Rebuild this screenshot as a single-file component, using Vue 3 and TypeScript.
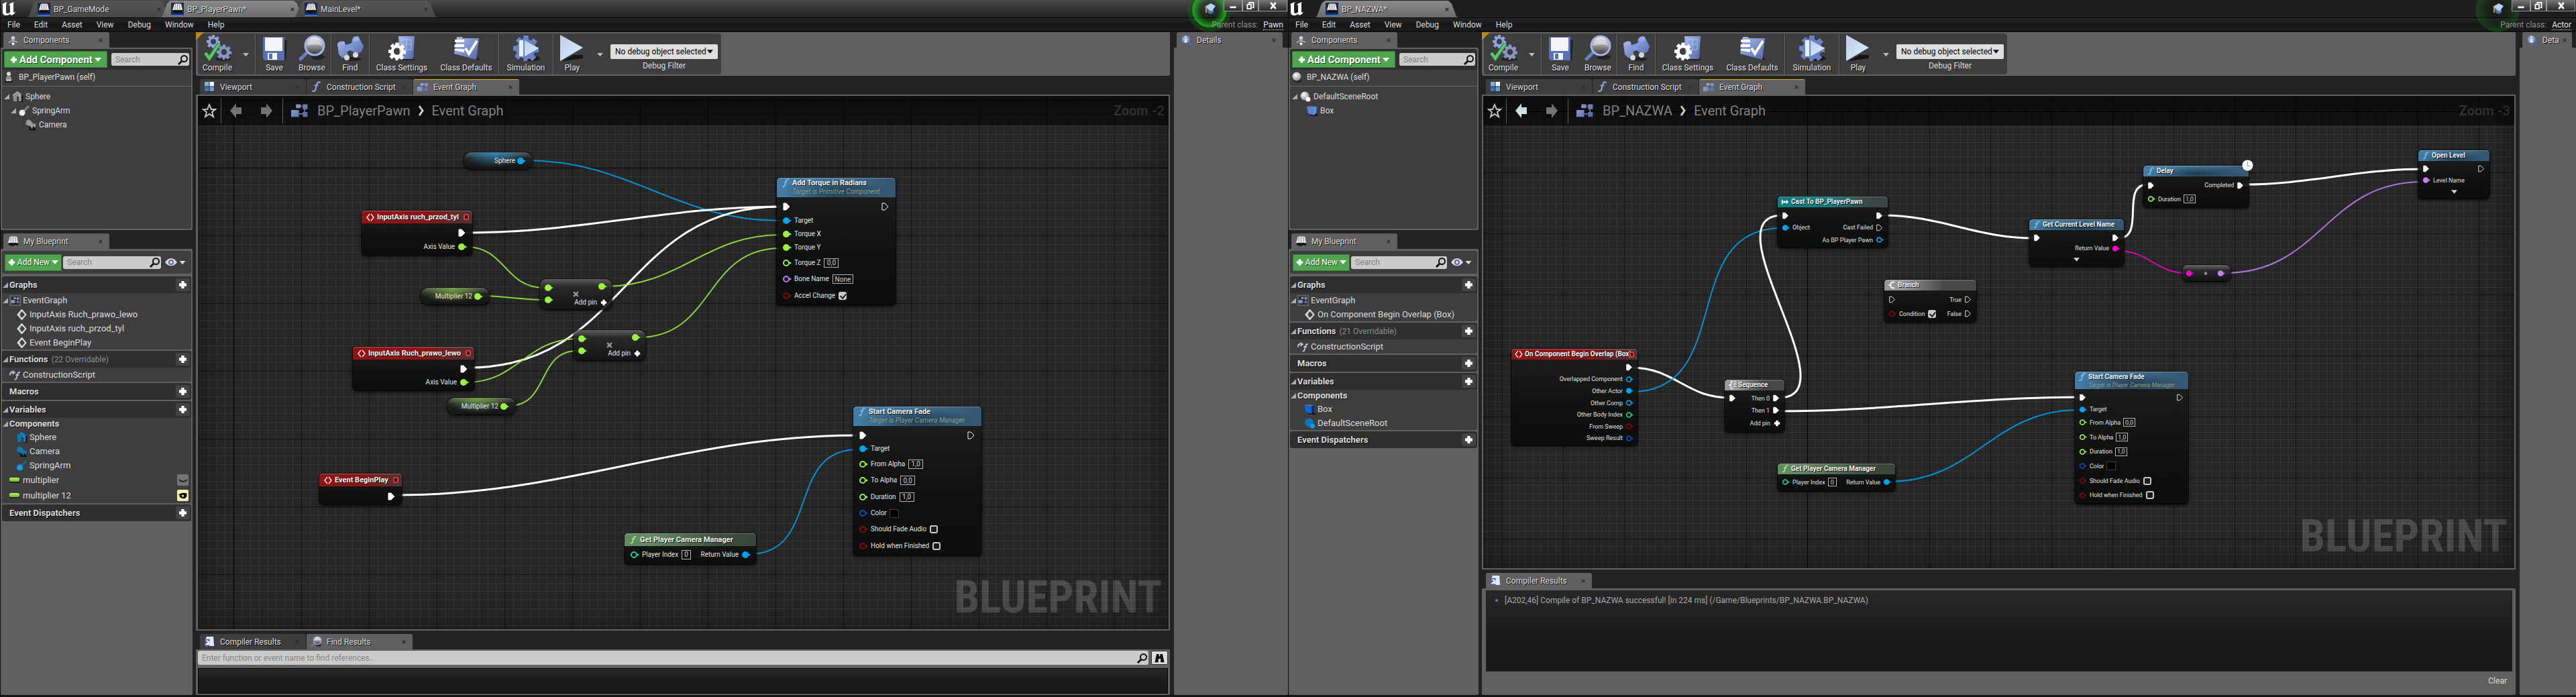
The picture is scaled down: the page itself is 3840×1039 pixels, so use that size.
<script setup lang="ts">
type PinKind = 'exec' | 'object' | 'float' | 'int' | 'bool' | 'name' | 'string' | 'struct'
interface Pin { k: PinKind; on?: boolean; label?: string; box?: string; check?: boolean; swatch?: boolean }
interface Row { l?: Pin; r?: Pin; tall?: boolean; add?: boolean; more?: boolean }
interface GraphNode {
  type: 'node' | 'var' | 'op' | 'conv'
  x: number; y: number; w: number; h: number
  tone?: string; icon?: string; title?: string; sub?: string; stop?: boolean; latent?: boolean
  kind?: PinKind; rows?: Row[]
}
interface Wire { a: [number, number]; b: [number, number]; k: PinKind; bend?: number }
interface TreeItem { label: string; icon: string; depth: number; open?: boolean }
interface ListItem { label: string; icon?: string; depth: number; open?: boolean; bold?: boolean; vis?: 'off' | 'on' }
interface Section { title: string; note?: string; open: boolean; items: ListItem[] }
interface Win {
  id: string; focused: boolean; tabs: { label: string; active: boolean }[]; parent: string; details: string
  self: string; selfIcon: string; tree: TreeItem[]; sections: Section[]
  name: string; back: boolean; zoom: string
  grid: { ox: number; oy: number; size: number; minor: number[] }
  nodes: GraphNode[]; wires: Wire[]
}

const menus = ['File', 'Edit', 'Asset', 'View', 'Debug', 'Window', 'Help']

const colors: Record<PinKind, string> = {
  exec: '#ffffff', object: '#00a2f2', float: '#98f440', int: '#18cf9c',
  bool: '#8c0404', name: '#c47dfb', string: '#fb00d2', struct: '#0a4db8',
}

function fadeRows(from: string, to: string): Row[] {
  return [
    { l: { k: 'exec', on: true }, r: { k: 'exec' } },
    { l: { k: 'object', on: true, label: 'Target' } },
    { l: { k: 'float', label: 'From Alpha', box: from }, tall: true },
    { l: { k: 'float', label: 'To Alpha', box: to }, tall: true },
    { l: { k: 'float', label: 'Duration', box: '1,0' }, tall: true },
    { l: { k: 'struct', label: 'Color', swatch: true }, tall: true },
    { l: { k: 'bool', label: 'Should Fade Audio', check: false }, tall: true },
    { l: { k: 'bool', label: 'Hold when Finished', check: false }, tall: true },
  ]
}
const cameraRows: Row[] = [
  { l: { k: 'int', label: 'Player Index', box: '0' }, r: { k: 'object', on: true, label: 'Return Value' }, tall: true },
]
const axisRows: Row[] = [{ r: { k: 'exec', on: true } }, { r: { k: 'float', on: true, label: 'Axis Value' } }]

const windows: Win[] = [
  {
    id: 'pawn', focused: true, parent: 'Pawn', details: 'Details',
    tabs: [{ label: 'BP_GameMode', active: false }, { label: 'BP_PlayerPawn*', active: true }, { label: 'MainLevel*', active: false }],
    self: 'BP_PlayerPawn (self)', selfIcon: 'pawn',
    tree: [
      { label: 'Sphere', icon: 'house', depth: 0, open: true },
      { label: 'SpringArm', icon: 'spring', depth: 1, open: true },
      { label: 'Camera', icon: 'camera', depth: 2 },
    ],
    sections: [
      { title: 'Graphs', open: true, items: [
        { label: 'EventGraph', icon: 'graph', depth: 0, open: true },
        { label: 'InputAxis Ruch_prawo_lewo', icon: 'event', depth: 1 },
        { label: 'InputAxis ruch_przod_tyl', icon: 'event', depth: 1 },
        { label: 'Event BeginPlay', icon: 'event', depth: 1 },
      ] },
      { title: 'Functions', note: '(22 Overridable)', open: true, items: [{ label: 'ConstructionScript', icon: 'construct', depth: 0 }] },
      { title: 'Macros', open: false, items: [] },
      { title: 'Variables', open: true, items: [
        { label: 'Components', depth: 0, open: true, bold: true },
        { label: 'Sphere', icon: 'house', depth: 1 },
        { label: 'Camera', icon: 'camera', depth: 1 },
        { label: 'SpringArm', icon: 'spring', depth: 1 },
        { label: 'multiplier', icon: 'pill', depth: 0, vis: 'off' },
        { label: 'multiplier 12', icon: 'pill', depth: 0, vis: 'on' },
      ] },
      { title: 'Event Dispatchers', open: false, items: [] },
    ],
    name: 'BP_PlayerPawn', back: false, zoom: 'Zoom -2',
    grid: { ox: 53, oy: 107, size: 101, minor: [13, 25, 38, 51, 63, 76, 88] },
    nodes: [
      { type: 'var', x: 396, y: 84, w: 103, h: 25, title: 'Sphere', kind: 'object' },
      { type: 'node', x: 244, y: 171, w: 165, h: 66, tone: 'red', icon: 'event', title: 'InputAxis ruch_przod_tyl', stop: true, rows: axisRows },
      { type: 'var', x: 332, y: 286, w: 103, h: 25, title: 'Multiplier 12', kind: 'float' },
      { type: 'op', x: 510, y: 273, w: 107, h: 45 },
      { type: 'op', x: 560, y: 349, w: 107, h: 45 },
      { type: 'node', x: 231, y: 374, w: 181, h: 65, tone: 'red', icon: 'event', title: 'InputAxis Ruch_prawo_lewo', stop: true, rows: axisRows },
      { type: 'var', x: 371, y: 450, w: 103, h: 25, title: 'Multiplier 12', kind: 'float' },
      { type: 'node', x: 181, y: 563, w: 123, h: 46, tone: 'red', icon: 'event', title: 'Event BeginPlay', stop: true, rows: [{ r: { k: 'exec', on: true } }] },
      { type: 'node', x: 863, y: 122, w: 177, h: 190, tone: 'blue', icon: 'func', title: 'Add Torque in Radians', sub: 'Target is Primitive Component', rows: [
        { l: { k: 'exec', on: true }, r: { k: 'exec' } },
        { l: { k: 'object', on: true, label: 'Target' } },
        { l: { k: 'float', on: true, label: 'Torque X' } },
        { l: { k: 'float', on: true, label: 'Torque Y' } },
        { l: { k: 'float', label: 'Torque Z', box: '0,0' }, tall: true },
        { l: { k: 'name', label: 'Bone Name', box: 'None' }, tall: true },
        { l: { k: 'bool', label: 'Accel Change', check: true }, tall: true },
      ] },
      { type: 'node', x: 977, y: 463, w: 191, h: 222, tone: 'blue', icon: 'func', title: 'Start Camera Fade', sub: 'Target is Player Camera Manager', rows: fadeRows('1,0', '0,0') },
      { type: 'node', x: 636, y: 652, w: 196, h: 46, tone: 'olive', icon: 'func', title: 'Get Player Camera Manager', rows: cameraRows },
    ],
    wires: [
      { a: [488, 96], b: [869, 186], k: 'object' },
      { a: [399, 204], b: [869, 165], k: 'exec' },
      { a: [403, 405], b: [869, 165], k: 'exec' },
      { a: [400, 225], b: [516, 286], k: 'float' },
      { a: [424, 298], b: [516, 304], k: 'float' },
      { a: [400, 427], b: [566, 362], k: 'float' },
      { a: [463, 462], b: [566, 380], k: 'float' },
      { a: [606, 284], b: [869, 207], k: 'float' },
      { a: [656, 360], b: [869, 227], k: 'float' },
      { a: [295, 595], b: [983, 506], k: 'exec' },
      { a: [822, 683], b: [983, 527], k: 'object' },
    ],
  },
  {
    id: 'nazwa', focused: false, parent: 'Actor', details: 'Deta',
    tabs: [{ label: 'BP_NAZWA*', active: true }],
    self: 'BP_NAZWA (self)', selfIcon: 'ball',
    tree: [
      { label: 'DefaultSceneRoot', icon: 'scene', depth: 0, open: true },
      { label: 'Box', icon: 'cube', depth: 1 },
    ],
    sections: [
      { title: 'Graphs', open: true, items: [
        { label: 'EventGraph', icon: 'graph', depth: 0, open: true },
        { label: 'On Component Begin Overlap (Box)', icon: 'event', depth: 1 },
      ] },
      { title: 'Functions', note: '(21 Overridable)', open: true, items: [{ label: 'ConstructionScript', icon: 'construct', depth: 0 }] },
      { title: 'Macros', open: false, items: [] },
      { title: 'Variables', open: true, items: [
        { label: 'Components', depth: 0, open: true, bold: true },
        { label: 'Box', icon: 'cube', depth: 1 },
        { label: 'DefaultSceneRoot', icon: 'scene', depth: 1 },
      ] },
      { title: 'Event Dispatchers', open: false, items: [] },
    ],
    name: 'BP_NAZWA', back: true, zoom: 'Zoom -3',
    grid: { ox: 483, oy: 23, size: 91, minor: [11, 23, 34, 46, 57, 68, 80] },
    nodes: [
      { type: 'node', x: 42, y: 377, w: 188, h: 144, tone: 'red', icon: 'event', title: 'On Component Begin Overlap (Box)', stop: true, rows: [
        { r: { k: 'exec', on: true } },
        { r: { k: 'object', label: 'Overlapped Component' } },
        { r: { k: 'object', on: true, label: 'Other Actor' } },
        { r: { k: 'object', label: 'Other Comp' } },
        { r: { k: 'int', label: 'Other Body Index' } },
        { r: { k: 'bool', label: 'From Sweep' } },
        { r: { k: 'struct', label: 'Sweep Result' } },
      ] },
      { type: 'node', x: 439, y: 150, w: 164, h: 76, tone: 'teal', icon: 'cast', title: 'Cast To BP_PlayerPawn', rows: [
        { l: { k: 'exec', on: true }, r: { k: 'exec', on: true } },
        { l: { k: 'object', on: true, label: 'Object' }, r: { k: 'exec', label: 'Cast Failed' } },
        { r: { k: 'object', label: 'As BP Player Pawn' } },
      ] },
      { type: 'node', x: 598, y: 274, w: 137, h: 63, tone: 'grey', icon: 'branch', title: 'Branch', rows: [
        { l: { k: 'exec' }, r: { k: 'exec', label: 'True' } },
        { l: { k: 'bool', label: 'Condition', check: true }, r: { k: 'exec', label: 'False' } },
      ] },
      { type: 'node', x: 814, y: 184, w: 141, h: 70, tone: 'blue', icon: 'func', title: 'Get Current Level Name', rows: [
        { l: { k: 'exec', on: true }, r: { k: 'exec', on: true } },
        { r: { k: 'string', on: true, label: 'Return Value' } },
        { more: true },
      ] },
      { type: 'node', x: 360, y: 423, w: 89, h: 78, tone: 'grey', icon: 'sequence', title: 'Sequence', rows: [
        { l: { k: 'exec', on: true }, r: { k: 'exec', on: true, label: 'Then 0' } },
        { r: { k: 'exec', on: true, label: 'Then 1' } },
        { add: true, tall: true },
      ] },
      { type: 'node', x: 882, y: 411, w: 169, h: 197, tone: 'blue', icon: 'func', title: 'Start Camera Fade', sub: 'Target is Player Camera Manager', rows: fadeRows('0,0', '1,0') },
      { type: 'node', x: 439, y: 548, w: 175, h: 41, tone: 'olive', icon: 'func', title: 'Get Player Camera Manager', rows: cameraRows },
      { type: 'node', x: 984, y: 104, w: 157, h: 62, tone: 'blue', icon: 'func', title: 'Delay', latent: true, rows: [
        { l: { k: 'exec', on: true }, r: { k: 'exec', on: true, label: 'Completed' } },
        { l: { k: 'float', label: 'Duration', box: '1,0' } },
      ] },
      { type: 'node', x: 1394, y: 81, w: 106, h: 72, tone: 'blue', icon: 'func', title: 'Open Level', rows: [
        { l: { k: 'exec', on: true }, r: { k: 'exec' } },
        { l: { k: 'name', on: true, label: 'Level Name' } },
        { more: true },
      ] },
      { type: 'conv', x: 1042, y: 252, w: 72, h: 24 },
    ],
    wires: [
      { a: [221, 405], b: [367, 450], k: 'exec' },
      { a: [221, 441], b: [445, 197], k: 'object' },
      { a: [440, 450], b: [446, 178], k: 'exec', bend: 112 },
      { a: [440, 470], b: [888, 449], k: 'exec' },
      { a: [595, 178], b: [821, 212], k: 'exec' },
      { a: [947, 212], b: [990, 132], k: 'exec' },
      { a: [947, 231], b: [1048, 264], k: 'string' },
      { a: [1134, 132], b: [1400, 109], k: 'exec' },
      { a: [1105, 264], b: [1400, 128], k: 'name' },
      { a: [604, 575], b: [888, 468], k: 'object' },
    ],
  },
]

function wirePath(w: Wire): string {
  const [x1, y1] = w.a
  const [x2, y2] = w.b
  const c = w.bend ?? Math.round((Math.abs(x2 - x1) + Math.abs(y2 - y1)) / 3)
  return `M${x1} ${y1}C${x1 + c} ${y1} ${x2 - c} ${y2} ${x2} ${y2}`
}
function box(n: GraphNode) {
  return { left: n.x + 'px', top: n.y + 'px', width: n.w + 'px', height: n.h + 'px' }
}
</script>

<template>
  <div class="desktop">
    <svg class="defs" aria-hidden="true">
      <defs>
        <linearGradient id="gBlue" x1="0" y1="0" x2="1" y2="1"><stop offset="0" stop-color="#a9bdf0" /><stop offset="1" stop-color="#5068a8" /></linearGradient>
        <linearGradient id="gPale" x1="0" y1="0" x2="1" y2="1"><stop offset="0" stop-color="#c0cbee" /><stop offset="1" stop-color="#d6f2f8" /></linearGradient>
        <linearGradient id="gLens" x1="0" y1="0" x2="0" y2="1"><stop offset="0" stop-color="#fff" /><stop offset=".5" stop-color="#999" /><stop offset="1" stop-color="#333" /></linearGradient>
        <radialGradient id="gBall" cx=".4" cy=".35" r=".7"><stop offset="0" stop-color="#fff" /><stop offset="1" stop-color="#888" /></radialGradient>
        <linearGradient id="gPill" x1="0" y1="0" x2="0" y2="1"><stop offset="0" stop-color="#c4f27c" /><stop offset="1" stop-color="#5cb80e" /></linearGradient>
      </defs>
      <symbol id="i-unreal" viewBox="0 0 24 20"><path fill="#fff" d="M1 5C3 2 6 1 10 0c-1 1-2 2-2 4v10c0 2 1 3 2 3 2 0 3-1 4-2V5c0-1-1-1-2 0 1-3 5-4 8-5-1 1-1 2-1 4v10c0 2 1 2 3 0-1 4-4 5-6 6l-2-2c-2 1-3 2-6 2-3 0-5-2-5-5V5C3 3 2 4 1 5z" /></symbol>
      <symbol id="i-book" viewBox="0 0 18 18"><path fill="#111" d="M2 12h15v4l-6-1-2 2-7-2z" /><path fill="#e8e8e8" d="M4 2l4-1 1 1 2-1 4 1 2 10-6-1-2 1-2-1-6 1z" /><path stroke="#888" fill="none" d="M9 2v9M6 2L5 10M12 2l1 8" /></symbol>
      <symbol id="i-x" viewBox="0 0 8 8"><path stroke="currentColor" stroke-width="2" d="M1 1l6 6M7 1L1 7" /></symbol>
      <symbol id="i-comps" viewBox="0 0 18 18"><path fill="#4d5d80" d="M4 1h9v7H4z" /><circle cx="9" cy="6" r="3" fill="#c9cdd6" /><path stroke="#aab" stroke-width="2" d="M9 8v8M8 10l-6 3M10 10l6 3" /><path fill="#fff" d="M6 14h6l-3 4z" /></symbol>
      <symbol id="i-info" viewBox="0 0 18 18"><path stroke="#4668c0" stroke-width="3" d="M12 12l5 5" /><circle cx="8" cy="8" r="6" fill="#aaa" stroke="#4f78d0" stroke-width="2" /><path stroke="#fff" stroke-width="2" d="M8 3v2M8 7v5M6 12h4" /></symbol>
      <symbol id="i-search" viewBox="0 0 16 16"><circle cx="9.500" cy="6.500" r="4.500" fill="none" stroke="#111" stroke-width="2" /><path stroke="#111" stroke-width="3" d="M6 10l-5 5" /></symbol>
      <symbol id="i-plus" viewBox="0 0 12 12"><path fill="currentColor" d="M4 1h4v3h3v4H8v3H4V8H1V4h3z" /></symbol>
      <symbol id="i-down" viewBox="0 0 10 8"><path fill="currentColor" d="M0 1h10L5 7z" /></symbol>
      <symbol id="i-tri" viewBox="0 0 8 8"><path fill="#aaa" d="M8 0v8H0z" /></symbol>
      <symbol id="i-eye" viewBox="0 0 18 14"><path fill="#d4d9e4" d="M0 7c5-8 13-8 18 0-5 7-13 7-18 0z" /><circle cx="9" cy="7" r="4" fill="#5b6a9c" /><circle cx="9" cy="7" r="2" fill="#e4e9fa" /></symbol>
      <symbol id="i-pawn" viewBox="0 0 14 16"><ellipse cx="7" cy="14" rx="6" ry="2" fill="#111" /><circle cx="7" cy="3" r="3" fill="#ddd" /><path fill="#bbb" d="M4 6h6v3h1v5H3V9h1z" /><path stroke="#444" d="M4 7h6M4 10h6" /></symbol>
      <symbol id="i-ball" viewBox="0 0 14 16"><ellipse cx="8" cy="13" rx="6" ry="3" fill="#222" /><circle cx="7" cy="7" r="6.500" fill="url(#gBall)" /></symbol>
      <symbol id="i-house" viewBox="0 0 16 16"><path fill="#111" d="M10 6h6v10h-6z" /><path fill="var(--ic,#8d8d8d)" d="M1 6l7-6 6 4v11h-3V8H7v7H2z" /><path stroke="var(--ic2,#ccc)" fill="none" d="M1 6l7-5 3 4v10" /></symbol>
      <symbol id="i-spring" viewBox="0 0 16 16"><circle cx="5" cy="11" r="4.500" fill="var(--ic2,#eee)" /><path stroke="var(--ic,#aaa)" stroke-width="3" d="M8 8l7-7" stroke-dasharray="2 1" /></symbol>
      <symbol id="i-camera" viewBox="0 0 16 16"><path fill="#111" d="M5 11l8 1 3 4H6z" /><path fill="var(--ic,#999)" d="M1 2l4-2 4 3 3 4 3-1v6l-4-2-1 5-3-5-6-2-1-3 2-1z" /></symbol>
      <symbol id="i-scene" viewBox="0 0 16 16"><circle cx="7" cy="7" r="6.500" fill="var(--ic,url(#gBall))" /><circle cx="12" cy="12" r="3.500" fill="var(--ic2,#fff)" /></symbol>
      <symbol id="i-cube" viewBox="0 0 16 16"><path fill="#151515" d="M6 13h10v3H7z" /><path fill="var(--ic,#5d7fe0)" d="M0 2l11 1v12L2 12z" /><path fill="var(--ic3,#4aa0d8)" d="M11 3l4-1-1 9-3 4z" /><path fill="#8fa5f0" d="M0 2l5-1 10 1-4 1z" opacity=".6" /></symbol>
      <symbol id="i-graph" viewBox="0 0 18 16"><path fill="url(#gBlue)" d="M5 1h5v4H5zM12 1h5v5h-5zM0 7h8v7H0zM12 9h5v5h-5z" /><path stroke="#8090b8" d="M10 3h2M14 6v3M8 11h4" /></symbol>
      <symbol id="i-event" viewBox="0 0 16 16"><path fill="none" stroke="currentColor" stroke-width="2" d="M8 1l6 7-6 7-6-7z" /><path fill="currentColor" d="M8 1v14L2 8z" opacity=".85" /><path fill="#444" d="M7 4l4 4-4 4-2-4z" /></symbol>
      <symbol id="i-evhead" viewBox="0 0 12 12"><path fill="none" stroke="#f3dcdc" stroke-width="1.500" d="M5 1L1 6l4 5M7 1l4 5-4 5" /></symbol>
      <symbol id="i-construct" viewBox="0 0 18 16"><path fill="#aab3d0" d="M0 8c0-4 2-6 5-6V0l5 4-5 4V5C3 5 2 6 2 9z" /><path fill="none" stroke="#b4bfe2" stroke-width="2" d="M17 4c-4-1-4 2-5 6s-1 5-4 5M10 8h5" /></symbol>
      <symbol id="i-pill" viewBox="0 0 16 8"><rect y="2" width="16" height="6" rx="2" fill="#222" /><rect width="15" height="6" rx="2" fill="url(#gPill)" /></symbol>
      <symbol id="i-window" viewBox="0 0 18 18"><path fill="#16233a" d="M2 2h15v15H2z" /><path fill="#7fb2d8" d="M1 1h7v7H1z" /><path fill="#f2f7fa" d="M9 1h7v7H9z" /><path fill="#3f74b0" d="M1 9h7v7H1z" /><path fill="#6f9fd0" d="M9 9h7v7H9z" /></symbol>
      <symbol id="i-func" viewBox="0 0 14 16"><path fill="none" stroke="currentColor" stroke-width="2" stroke-linecap="round" d="M12 2c-3-2-4 1-5 5s-1 8-5 7" /><path stroke="currentColor" stroke-width="1.500" d="M4 6h6" /></symbol>
      <symbol id="i-cast" viewBox="0 0 14 12"><path fill="none" stroke="#fff" stroke-width="2" d="M2 2v8M3 6h7" /><path fill="#fff" d="M5 3l3 3-3 3zM9 2l4 4-4 4z" /></symbol>
      <symbol id="i-branch" viewBox="0 0 14 14"><path fill="none" stroke="#fff" stroke-width="2" d="M1 7h3M12 2H9C6 2 5 4 5 7s1 5 4 5h3" /></symbol>
      <symbol id="i-sequence" viewBox="0 0 14 14"><path fill="none" stroke="#fff" stroke-width="1.500" d="M1 7h4M9 1H5v12h4M9 5h5M9 9h4M11 1h3" /></symbol>
      <symbol id="i-gear" viewBox="0 0 20 20"><path fill="currentColor" fill-rule="evenodd" d="M8 0h4v3l2 1 2-2 3 3-2 2 1 2h2v4h-3l-1 2 2 2-3 3-2-2-2 1v2H8v-3l-2-1-2 2-3-3 2-2-1-2H0V8h3l1-2-2-2 3-3 2 2 1-1zM10 6a4 4 0 100 8 4 4 0 000-8z" /></symbol>
      <symbol id="i-compile" viewBox="0 0 42 40"><ellipse cx="30" cy="36" rx="12" ry="3" fill="#222" /><use href="#i-gear" x="5" y="0" width="20" height="20" color="#8ea2e0" /><use href="#i-gear" x="20" y="14" width="22" height="23" color="#8795c8" /><path fill="none" stroke="#1f7a34" stroke-width="6" d="M3 27l6 8L24 13" /><path fill="none" stroke="#5cc474" stroke-width="4" d="M3 27l6 8L24 13" /></symbol>
      <symbol id="i-save" viewBox="0 0 42 40"><path fill="#222" d="M8 8h32l-2 30H12z" /><path fill="#5570b4" d="M4 3h32v35H7l-3-3z" /><path fill="#f4f4f8" d="M7 4h26v20H7zM11 27h14v10H11z" /><path fill="#5570b4" d="M13 28h5v8h-5z" /></symbol>
      <symbol id="i-browse" viewBox="0 0 42 40"><ellipse cx="30" cy="33" rx="10" ry="4" fill="#222" /><path stroke="#6380c4" stroke-width="5" stroke-linecap="round" d="M14 26L4 36" /><circle cx="25" cy="16" r="14" fill="url(#gLens)" stroke="#9fb4e8" stroke-width="3" /><path fill="#e4e4e4" opacity=".6" d="M13 15c5 2 13-4 24 2a13 13 0 00-24-2z" /></symbol>
      <symbol id="i-find" viewBox="0 0 42 40"><ellipse cx="24" cy="36" rx="14" ry="3" fill="#222" /><path fill="url(#gBlue)" d="M2 14l11-3 5 20-8 4-6-6zM24 6l9-4 8 15-3 8-8 4-8-6z" /><path fill="#7e98dc" d="M14 15l10-3v10l-8 3z" /><path fill="#99aee8" d="M25 6c0-4 8-5 9-2l1 4-8 2zM2 14c0-4 9-6 11-3v3L3 17z" /><circle cx="16" cy="34" r="4" fill="#d4d8e0" /><circle cx="29" cy="30" r="4" fill="#d4d8e0" /></symbol>
      <symbol id="i-settings" viewBox="0 0 42 40"><path fill="#222" d="M18 34h22v4H18z" /><path fill="url(#gBlue)" d="M16 2h24l-2 34H18z" /><path stroke="#c3d0f2" fill="none" opacity=".7" d="M21 7h14v15H21zM28 7v15M21 14h14" /><use href="#i-gear" x="1" y="11" width="26" height="27" color="#fff" /></symbol>
      <symbol id="i-defaults" viewBox="0 0 42 40"><path fill="#222" d="M10 30l30 4v4z" /><path fill="url(#gBlue)" d="M7 3h8l1 2h24l-4 32-33-9z" /><path fill="#fff" d="M4 7h14v4H4zM4 14h14v4H3zM4 21h14v5L3 23z" /><path fill="none" stroke="#fff" stroke-width="4" d="M20 20l5 8L37 9" /></symbol>
      <symbol id="i-simulate" viewBox="0 0 42 40"><ellipse cx="29" cy="35" rx="13" ry="4" fill="#1c1c1c" /><use href="#i-gear" x="2" y="1" width="38" height="38" color="#6a83c8" /><circle cx="21" cy="20" r="9" fill="#7088cc" /><path fill="#e2f3f5" d="M11 8h6v24h-6z" /><path fill="url(#gPale)" d="M19 8l21 12-21 12z" /></symbol>
      <symbol id="i-play" viewBox="0 0 42 40"><path fill="#151515" d="M6 39l17-9h14v5z" /><path fill="url(#gPale)" d="M3 0l34 19L3 39z" /></symbol>
      <symbol id="i-star" viewBox="0 0 22 22"><path fill="none" stroke="#e8e8e8" stroke-width="2" d="M11 2l3 7h6l-5 4 2 7-6-4-6 4 2-7-5-4h6z" /></symbol>
      <symbol id="i-back" viewBox="0 0 18 24"><path fill="#050505" d="M8 20h10v2H9z" /><path fill="currentColor" d="M0 12L9 1v6h8v10H9v6z" /></symbol>
      <symbol id="i-hat" viewBox="0 0 18 18"><path fill="#4a76ae" d="M4 9l10 1v5l-5 2-4-3z" /><path fill="#b6d4f4" d="M1 6l9-5 7 4-6 8z" /><path stroke="#c98a3a" stroke-width="2" d="M3 6v9" /></symbol>
      <symbol id="i-report" viewBox="0 0 18 18"><path fill="#dfe8f8" d="M4 1h11l1 15H5L2 8z" /><path fill="#4a6cb0" d="M1 5h8v11l-6 1z" /><path fill="none" stroke="#fff" stroke-width="2" d="M4 7l4 3-4 3h6" /></symbol>
      <symbol id="i-bino" viewBox="0 0 16 16"><path fill="#0a0a0a" d="M3 1h4v4h2V1h4l3 14h-6V9H6v6H0z" /></symbol>
    </svg>

    <main v-for="w in windows" :key="w.id" class="window" :class="w.id">
      <header class="titlebar" :class="{ dim: !w.focused }">
        <svg class="logo"><use href="#i-unreal" /></svg>
        <nav class="doc-tabs">
          <button v-for="t in w.tabs" :key="t.label" class="doc-tab" :class="{ on: t.active }">
            <span class="doc-icon"><svg><use href="#i-book" /></svg></span>
            <span class="doc-label">{{ t.label }}</span>
            <svg class="x"><use href="#i-x" /></svg>
          </button>
        </nav>
        <div class="sys">
          <span class="halo"></span>
          <svg class="hat"><use href="#i-hat" /></svg>
          <button aria-label="Minimize" class="sys-btn"><svg viewBox="0 0 12 12"><path fill="#fff" d="M1 7h10v3H1z" /></svg></button>
          <button aria-label="Restore" class="sys-btn narrow"><svg viewBox="0 0 12 12"><path fill="none" stroke="#fff" stroke-width="2" d="M4 3V1h7v8H9M1 4h6v7H1z" /></svg></button>
          <button aria-label="Close" class="sys-btn wide"><svg viewBox="0 0 12 12"><path stroke="#fff" stroke-width="3" d="M2 1l8 10M10 1L2 11" /></svg></button>
        </div>
      </header>

      <div class="menubar">
        <button v-for="m in menus" :key="m">{{ m }}</button>
        <p class="parent">Parent class: <a href="#">{{ w.parent }}</a></p>
      </div>

      <div class="body">
        <aside class="side">
          <div class="tabs"><div class="tab on"><svg><use href="#i-comps" /></svg><span>Components</span><svg class="x"><use href="#i-x" /></svg></div></div>
          <section class="panel comps">
            <div class="comp-bar">
              <button class="green big"><svg class="p"><use href="#i-plus" /></svg><span>Add Component</span><svg class="d"><use href="#i-down" /></svg></button>
              <div class="search"><input type="text" placeholder="Search" aria-label="Search components" /><svg><use href="#i-search" /></svg></div>
            </div>
            <div class="self"><svg><use :href="'#i-' + w.selfIcon" /></svg>{{ w.self }}</div>
            <ul class="tree">
              <li v-for="i in w.tree" :key="i.label" :class="'d' + i.depth">
                <svg class="t"><use v-if="i.open" href="#i-tri" /></svg><svg class="ic"><use :href="'#i-' + i.icon" /></svg>{{ i.label }}
              </li>
            </ul>
          </section>

          <div class="tabs second"><div class="tab on"><svg><use href="#i-book" /></svg><span>My Blueprint</span><svg class="x"><use href="#i-x" /></svg></div></div>
          <section class="panel mybp">
            <div class="bp-bar">
              <button class="green"><svg class="p"><use href="#i-plus" /></svg><span>Add New</span><svg class="d"><use href="#i-down" /></svg></button>
              <div class="search"><input type="text" placeholder="Search" aria-label="Search blueprint" /><svg><use href="#i-search" /></svg></div>
              <button class="eye" aria-label="View options"><svg class="e"><use href="#i-eye" /></svg><svg class="d"><use href="#i-down" /></svg></button>
            </div>
            <div v-for="s in w.sections" :key="s.title" class="section">
              <h3><svg class="t"><use v-if="s.open" href="#i-tri" /></svg>{{ s.title }}<small v-if="s.note">{{ s.note }}</small>
                <button :aria-label="'Add to ' + s.title"><svg><use href="#i-plus" /></svg></button></h3>
              <ul v-if="s.items.length">
                <li v-for="i in s.items" :key="i.label" :class="['d' + i.depth, { bold: i.bold, tall: i.vis, tint: s.title === 'Variables' }]">
                  <svg class="t"><use v-if="i.open" href="#i-tri" /></svg>
                  <svg v-if="i.icon" class="ic" :class="i.icon"><use :href="'#i-' + i.icon" /></svg>
                  <span>{{ i.label }}</span>
                  <button v-if="i.vis" class="vis" :class="i.vis" aria-label="Toggle visibility">
                    <svg viewBox="0 0 14 14">
                      <path v-if="i.vis === 'off'" fill="none" stroke="#222" stroke-width="2" d="M1 6c4 4 8 4 12 0" />
                      <path v-else fill="#111" fill-rule="evenodd" d="M0 6c3-4 9-4 13-2l-1 2 1 1-3 4C6 12 3 10 1 8l2-1zM5 6l1 3 2-1V6z" />
                    </svg>
                  </button>
                </li>
              </ul>
            </div>
          </section>
        </aside>

        <div class="center">
          <div class="toolstrip">
            <div class="tools">
              <button class="tool compile"><svg><use href="#i-compile" /></svg>Compile</button>
              <button class="caret" aria-label="Compile options"><svg><use href="#i-down" /></svg></button>
              <i class="sep"></i>
              <button class="tool"><svg><use href="#i-save" /></svg>Save</button>
              <button class="tool"><svg><use href="#i-browse" /></svg>Browse</button>
              <i class="sep"></i>
              <button class="tool"><svg><use href="#i-find" /></svg>Find</button>
              <i class="sep"></i>
              <button class="tool w2"><svg><use href="#i-settings" /></svg>Class Settings</button>
              <button class="tool w2"><svg><use href="#i-defaults" /></svg>Class Defaults</button>
              <i class="sep"></i>
              <button class="tool w1"><svg><use href="#i-simulate" /></svg>Simulation</button>
              <i class="sep"></i>
              <button class="tool"><svg><use href="#i-play" /></svg>Play</button>
              <button class="caret" aria-label="Play options"><svg><use href="#i-down" /></svg></button>
              <div class="debug">
                <span class="combo"><select :id="'dbg-' + w.id"><option>No debug object selected</option></select><svg><use href="#i-down" /></svg></span>
                <label :for="'dbg-' + w.id">Debug Filter</label>
              </div>
            </div>
          </div>

          <div class="tabs graph-tabs">
            <div class="tab"><svg><use href="#i-window" /></svg><span>Viewport</span><svg class="x"><use href="#i-x" /></svg></div>
            <div class="tab"><svg class="fn"><use href="#i-func" /></svg><span>Construction Script</span><svg class="x"><use href="#i-x" /></svg></div>
            <div class="tab on gold"><svg><use href="#i-graph" /></svg><span>Event Graph</span><svg class="x"><use href="#i-x" /></svg></div>
          </div>

          <section class="graph">
            <svg class="wires" aria-hidden="true">
              <defs>
                <pattern :id="'grid-' + w.id" patternUnits="userSpaceOnUse" :x="w.grid.ox" :y="w.grid.oy" :width="w.grid.size" :height="w.grid.size">
                  <rect width="101" height="101" fill="#262626" />
                  <g fill="#343434">
                    <rect v-for="m in w.grid.minor" :key="'v' + m" :x="m" y="0" width="1" :height="w.grid.size" />
                    <rect v-for="m in w.grid.minor" :key="'h' + m" x="0" :y="m" :width="w.grid.size" height="1" />
                  </g>
                  <rect width="1" :height="w.grid.size" fill="#141414" /><rect :width="w.grid.size" height="1" fill="#141414" />
                </pattern>
              </defs>
              <rect width="100%" height="100%" :fill="`url(#grid-${w.id})`" />
              <rect :x="w.grid.ox" width="1" height="100%" fill="#000" />
              <rect :y="w.grid.oy" width="100%" height="1" fill="#000" />
              <path v-for="(e, n) in w.wires" :key="n" :d="wirePath(e)" fill="none" :stroke="colors[e.k]" :stroke-width="e.k === 'exec' ? 3 : 2" :opacity="e.k === 'exec' ? 1 : 0.85" />
            </svg>
            <div class="mark">BLUEPRINT</div>

            <article v-for="(n, ni) in w.nodes" :key="ni" :class="[n.type, n.tone, n.kind]" :style="box(n)">
              <template v-if="n.type === 'node'">
                <header :class="{ two: n.sub }">
                  <svg class="hi"><use :href="n.icon === 'event' ? '#i-evhead' : '#i-' + n.icon" /></svg>
                  <div><b>{{ n.title }}</b><em v-if="n.sub">{{ n.sub }}</em></div>
                  <span v-if="n.stop" class="stop"></span>
                </header>
                <svg v-if="n.latent" class="clock" viewBox="0 0 18 18"><circle cx="9" cy="9" r="8.500" fill="#fff" /><path fill="none" stroke="#888" d="M9 3v7h4" /></svg>
                <div class="rows" :class="{ one: n.rows!.length === 1 && !n.stop }">
                  <div v-for="(r, ri) in n.rows" :key="ri" class="row" :class="{ tall: r.tall, mid: r.more }">
                    <svg v-if="r.more" class="more"><use href="#i-down" /></svg>
                    <button v-if="r.add" class="addpin">Add pin<svg><use href="#i-plus" /></svg></button>
                    <template v-for="s in (['l', 'r'] as const)" :key="s">
                      <div v-if="r[s]" class="pin" :class="s">
                        <svg class="dot" viewBox="0 0 14 12">
                          <path v-if="r[s]!.k === 'exec'" :fill="r[s]!.on ? '#fff' : 'none'" stroke="#fff" d="M2 1h4l5 5-5 5H2z" stroke-linejoin="round" />
                          <template v-else>
                            <circle cx="6" cy="6" r="4" :fill="r[s]!.on ? colors[r[s]!.k] : '#0b0b0b'" :stroke="colors[r[s]!.k]" stroke-width="2" />
                            <path :fill="colors[r[s]!.k]" d="M11 4l3 2-3 2z" />
                          </template>
                        </svg>
                        <label v-if="r[s]!.label" :for="`p-${w.id}-${ni}-${ri}-${s}`">{{ r[s]!.label }}</label>
                        <input v-if="r[s]!.box" :id="`p-${w.id}-${ni}-${ri}-${s}`" type="text" :value="r[s]!.box" :class="'n' + r[s]!.box!.length" />
                        <input v-if="r[s]!.check !== undefined" :id="`p-${w.id}-${ni}-${ri}-${s}`" type="checkbox" :checked="r[s]!.check" />
                        <button v-if="r[s]!.swatch" :id="`p-${w.id}-${ni}-${ri}-${s}`" class="swatch" aria-label="Color"></button>
                      </div>
                    </template>
                  </div>
                </div>
              </template>
              <template v-else-if="n.type === 'var'">
                <span>{{ n.title }}</span>
                <svg class="dot" viewBox="0 0 14 12"><circle cx="6" cy="6" r="5" :fill="colors[n.kind!]" /><path :fill="colors[n.kind!]" d="M10 4l4 2-4 2z" /></svg>
              </template>
              <template v-else-if="n.type === 'op'">
                <div class="ins">
                  <svg v-for="i in 2" :key="i" class="dot" viewBox="0 0 14 12"><circle cx="6" cy="6" r="5" fill="#98f440" /><path fill="#98f440" d="M10 4l4 2-4 2z" /></svg>
                </div>
                <div class="op-main">
                  <div class="op-top"><svg class="times"><use href="#i-x" /></svg><svg class="dot" viewBox="0 0 14 12"><circle cx="6" cy="6" r="5" fill="#98f440" /><path fill="#98f440" d="M10 4l4 2-4 2z" /></svg></div>
                  <button class="addpin">Add pin<svg><use href="#i-plus" /></svg></button>
                </div>
              </template>
              <template v-else>
                <svg class="dot" viewBox="0 0 14 12"><circle cx="6" cy="6" r="5" :fill="colors.string" /><path :fill="colors.string" d="M10 4l4 2-4 2z" /></svg>
                <i></i>
                <svg class="dot" viewBox="0 0 14 12"><circle cx="6" cy="6" r="5" :fill="colors.name" /><path :fill="colors.name" d="M10 4l4 2-4 2z" /></svg>
              </template>
            </article>

            <div class="crumbs">
              <button aria-label="Favourite"><svg class="star"><use href="#i-star" /></svg></button><i></i>
              <button aria-label="Back" class="nav" :class="{ lit: w.back }"><svg><use href="#i-back" /></svg></button>
              <button aria-label="Forward" class="nav fwd"><svg><use href="#i-back" /></svg></button><i></i>
              <svg class="gi"><use href="#i-graph" /></svg>
              <span>{{ w.name }}</span>
              <svg class="chev" viewBox="0 0 10 16"><path fill="none" stroke="#e0e0e0" stroke-width="3" d="M2 1l5 7-5 7" /></svg>
              <span>Event Graph</span>
              <b>{{ w.zoom }}</b>
            </div>
            <div class="shade"></div>
          </section>

          <template v-if="w.id === 'pawn'">
            <div class="tabs graph-tabs">
              <div class="tab"><svg><use href="#i-report" /></svg><span>Compiler Results</span><svg class="x"><use href="#i-x" /></svg></div>
              <div class="tab on"><svg><use href="#i-browse" /></svg><span>Find Results</span><svg class="x"><use href="#i-x" /></svg></div>
            </div>
            <section class="panel results">
              <div class="find">
                <div class="search"><input type="text" placeholder="Enter function or event name to find references.." aria-label="Find references" /><svg><use href="#i-search" /></svg></div>
                <button aria-label="Find in all blueprints"><svg><use href="#i-bino" /></svg></button>
              </div>
              <div class="well"></div>
            </section>
          </template>
          <template v-else>
            <div class="tabs graph-tabs">
              <div class="tab on"><svg><use href="#i-report" /></svg><span>Compiler Results</span><svg class="x"><use href="#i-x" /></svg></div>
            </div>
            <section class="panel log">
              <ul class="well"><li>[A202,46] Compile of BP_NAZWA successful! [in 224 ms] (/Game/Blueprints/BP_NAZWA.BP_NAZWA)</li></ul>
              <button>Clear</button>
            </section>
          </template>
        </div>

        <aside class="details">
          <div class="tabs"><div class="tab on"><svg><use href="#i-info" /></svg><span>{{ w.details }}</span><svg class="x"><use href="#i-x" /></svg></div></div>
          <section class="panel"></section>
        </aside>
      </div>
    </main>
  </div>
</template>

<style>
body { margin: 0; background: #111; }
</style>

<style scoped>
* { box-sizing: border-box; }
.desktop { display: flex; height: 100vh; min-height: 900px; font: 12px/16px Roboto, "Liberation Sans", sans-serif; color: #dcdcdc; background: #111; overflow: hidden; }
.defs { position: absolute; width: 0; height: 0; }
button { font: inherit; color: inherit; border: 0; padding: 0; background: none; }
ul { list-style: none; margin: 0; padding: 0; }
.window { flex: 1; min-width: 0; display: flex; flex-direction: column; background: #222; border-left: 1px solid #0c0c0c; border-bottom: 3px solid #151515; overflow: hidden; }

.titlebar { display: flex; height: 27px; flex: none; background: linear-gradient(#484848, #222); border-bottom: 1px solid #000; }
.titlebar.dim { background: #1e1e1e; }
.logo { width: 24px; height: 20px; margin: 3px 15px 0 0; }
.doc-tabs { display: flex; flex: 1; padding-top: 1px; }
.doc-tab { display: flex; align-items: center; width: 214px; height: 25px; margin-right: -15px; padding: 0 14px 0 16px; background: linear-gradient(#555, #484848); clip-path: polygon(0 100%, 3px 94%, 10px 18%, 15px 0, 199px 0, 204px 18%, 211px 94%, 214px 100%); text-shadow: 1px 1px #111; }
.doc-tab.on { background: linear-gradient(#8a8a8a, #6c6c6c); }
.doc-icon { width: 19px; height: 20px; background: #1d2a48; border-bottom: 2px solid #3a6fe0; margin-right: 5px; }
.doc-icon svg { display: block; width: 19px; height: 17px; }
.doc-label { flex: 1; text-align: left; }
.x { width: 6px; height: 6px; color: #2e2e2e; flex: none; }
.sys { position: relative; display: flex; align-items: flex-start; padding-right: 1px; }
.sys-btn { position: relative; width: 28px; height: 17px; border: 1px solid #999; border-top: 0; background: linear-gradient(#777, #2a2a2a); display: grid; place-items: center; }
.sys-btn svg { width: 12px; height: 11px; }
.sys-btn.narrow { width: 24px; }
.sys-btn.wide { width: 43px; }
.hat { position: relative; width: 18px; height: 18px; margin: 4px 11px 0 0; }
.halo { position: absolute; left: -25px; top: -18px; width: 66px; height: 66px; border-radius: 50%; background: radial-gradient(closest-side, rgba(0, 40, 0, .2) 40%, rgba(24, 190, 24, .85) 76%, rgba(24, 100, 24, .45) 79%, rgba(24, 90, 24, .45) 100%); z-index: 2; pointer-events: none; }
.dim .halo { background: radial-gradient(closest-side, rgba(0, 40, 0, .1) 40%, rgba(24, 110, 24, .4) 97%, transparent 100%); }
.hat, .sys-btn { z-index: 3; }

.menubar { display: flex; align-items: center; height: 20px; flex: none; padding: 0 7px 0 10px; gap: 21px; background: linear-gradient(#262626, #161616 50%, #1c1c1c); border-bottom: 1px solid #000; }
.parent { margin: 0 0 0 auto; color: #8f8f8f; position: relative; z-index: 4; }
.parent a { color: #e4e4e4; text-decoration: none; border-bottom: 1px dotted #ddd; margin-left: 5px; }

.body { flex: 1; min-height: 0; display: flex; padding-top: 1px; }
.side { width: 286px; flex: none; display: flex; flex-direction: column; margin-right: 5px; }
.nazwa .side { width: 283px; }
.center { flex: 1; min-width: 0; display: flex; flex-direction: column; }
.details { width: 170px; flex: none; display: flex; flex-direction: column; margin-left: 6px; }
.nazwa .details { width: 84px; }
.details .panel { flex: 1; }

.tabs { display: flex; flex: none; padding-left: 4px; gap: 1px; }
.tabs.second, .graph-tabs { padding-top: 5px; }
.graph-tabs { padding-left: 6px; }
.tab { display: flex; align-items: center; width: 158px; min-width: 0; height: 23px; padding: 0 10px 0 6px; background: #3d3d3d; border-radius: 3px 3px 0 0; text-shadow: 1px 1px #0a0a0a; }
.tab.on { background: #606060; }
.tab.gold { border-top: 1px solid #d8b41c; }
.tab > svg:first-child { width: 17px; height: 17px; margin-right: 7px; flex: none; }
.tab .fn { color: #8fa6e6; }
.tab span { flex: 1; min-width: 0; white-space: nowrap; }
.nazwa .details .tab { width: 74px; padding-right: 8px; }
.panel { background: #606060; border-radius: 0 2px 2px 2px; padding: 2px; }

.green { display: flex; align-items: center; justify-content: center; gap: 3px; width: 85px; height: 25px; background: #4fa64f; border: 1px solid #2f7c34; color: #fff; text-shadow: 1px 1px #1a3f1a; flex: none; }
.green .p { width: 11px; height: 12px; }
.green .d { width: 10px; height: 8px; }
.green.big { width: 154px; font-size: 15px; font-weight: 700; }
.search { display: flex; align-items: center; flex: 1; min-width: 0; height: 19px; background: #cbcbcb; border-radius: 3px; }
.search input { flex: 1; min-width: 0; height: 19px; border: 0; padding: 0 6px; background: none; font: inherit; color: #222; outline: 0; }
.search input::placeholder { color: #858585; opacity: 1; }
.search svg { width: 16px; height: 16px; margin-right: 1px; flex: none; }

.comps { height: 272px; display: flex; flex-direction: column; }
.comp-bar { display: flex; align-items: center; gap: 6px; height: 31px; padding: 0 3px; background: #2f2f2f; border-radius: 3px 3px 0 0; }
.self { display: flex; align-items: center; gap: 8px; height: 25px; padding: 0 0 3px 3px; background: #3e3e3e; border-bottom: 1px solid #666; }
.self svg { width: 14px; height: 16px; }
.tree { flex: 1; background: #3e3e3e; padding-top: 4px; border-radius: 0 0 3px 3px; }
.tree li { display: flex; align-items: center; height: 21px; gap: 4px; padding-left: 3px; }
.tree .t { width: 8px; height: 8px; }
.tree .ic { width: 16px; height: 16px; }
.tree li.d1 { padding-left: 13px; }
.tree li.d2 { padding-left: 23px; }

.mybp { flex: 1; display: flex; flex-direction: column; gap: 2px; }
.bp-bar { display: flex; align-items: center; gap: 2px; height: 34px; padding: 0 8px 0 4px; background: #3e3e3e; border-radius: 3px; margin: 1px 0 2px; }
.eye { display: flex; align-items: center; gap: 3px; margin-left: 4px; }
.eye .e { width: 18px; height: 14px; }
.eye .d { width: 10px; height: 7px; }
.section { font-size: 13px; background: #3e3e3e; border-radius: 3px; overflow: hidden; flex: none; }
.section h3 { display: flex; align-items: center; height: 25px; margin: 0; padding: 0 2px 0 1px; font-size: 13px; font-weight: 700; background: #2f2f2f; text-shadow: 1px 1px #000; }
.section h3 small { font-size: 12px; font-weight: 400; color: #8d8d8d; margin-left: 5px; text-shadow: none; }
.section h3 button { margin-left: auto; width: 21px; height: 19px; background: #434343; border-radius: 2px; color: #fff; display: grid; place-items: center; }
.section h3 button svg { width: 13px; height: 13px; }
.section .t { width: 8px; height: 8px; margin-right: 2px; flex: none; }
.section li { display: flex; align-items: center; height: 21px; padding: 0 4px 0 1px; }
.section li.tall { height: 23px; }
.section li.bold { height: 18px; font-weight: 700; text-shadow: 1px 1px #111; }
.section li.d1 { padding-left: 11px; }
.section .ic { width: 17px; height: 16px; margin-right: 3px; flex: none; }
.section .ic.pill { width: 16px; height: 8px; margin: 0 4px 0 0; }
.tint { --ic: #0878b4; --ic2: #0a9cec; --ic3: #0a2c66; }
.tint .cube { --ic: #0c63e0; }
.vis { margin-left: auto; width: 17px; height: 17px; border-radius: 2px; background: #757575; display: grid; place-items: center; }
.vis.on { background: #f3eeb0; }
.vis svg { width: 14px; height: 14px; }

.toolstrip { height: 65px; flex: none; padding: 2px 3px; background: linear-gradient(135deg, #b48a1c 8px, #606060 9px); border-radius: 0 0 3px 3px; }
.tools { display: inline-flex; height: 61px; background: #3e3e3e; border-radius: 4px; padding-right: 5px; clip-path: polygon(7px 0, 100% 0, 100% 100%, 0 100%, 0 7px); }
.tool { display: flex; flex-direction: column; align-items: center; justify-content: space-between; width: 56px; flex: none; padding: 2px 0; text-shadow: 1px 1px #000; color: #e4e4e4; white-space: nowrap; }
.tool svg { width: 42px; height: 40px; }
.tool.compile { width: 58px; }
.tool.w2 { width: 96px; }
.tool.w1 { width: 80px; }
.caret { width: 27px; flex: none; color: #bdbdbd; }
.caret svg { width: 9px; height: 7px; }
.sep { width: 1px; flex: none; background: #6a6a6a; box-shadow: 1px 0 #2c2c2c; }
.debug { display: flex; flex-direction: column; align-items: center; padding: 16px 0 0 2px; gap: 2px; }
.combo { position: relative; display: block; width: 160px; height: 22px; }
.combo select { appearance: none; width: 100%; height: 22px; border: 0; border-radius: 2px; padding: 0 7px; background: #dedede; color: #000; font: inherit; }
.combo svg { position: absolute; right: 7px; top: 7px; width: 9px; height: 8px; color: #111; }

.graph { position: relative; flex: 1; min-height: 0; border: 2px solid #606060; border-left-width: 3px; background: #262626; overflow: hidden; }
.nazwa .graph { border-left-width: 2px; }
.wires { position: absolute; inset: 0; width: 100%; height: 100%; }
.shade { position: absolute; inset: 0; box-shadow: inset 0 0 50px rgba(0, 0, 0, .45); pointer-events: none; }
.mark { position: absolute; right: 10px; bottom: 10px; font: 700 67px/76px "Roboto Condensed", Roboto, sans-serif; color: rgba(255, 255, 255, .17); }
.crumbs { position: absolute; left: 0; right: 0; top: 0; height: 44px; display: flex; align-items: center; padding: 0 6px; background: rgba(0, 0, 0, .58); font-size: 20px; line-height: 24px; color: #8c8c8c; }
.crumbs button { display: flex; }
.crumbs > i { width: 1px; height: 38px; background: #666; margin-left: 6px; }
.star { width: 22px; height: 22px; }
.nav { color: #7d7d7d; margin-left: 13px; }
.nav svg { width: 18px; height: 24px; }
.nav.fwd { margin: 0 9px 0 27px; }
.nav.fwd svg { transform: scaleX(-1); }
.nav.lit { color: #dff4f6; }
.gi { width: 28px; height: 23px; margin: 0 12px 0 11px; }
.chev { width: 10px; height: 16px; margin: 0 11px; }
.crumbs b { margin-left: auto; color: #333; font-size: 20px; }

.graph { --body: 10px; --title: 11px; --head: 19px; --head2: 29px; --pw: 14px; --ph: 12px; --pad: 8px; --rowtop: 4px; --hpad: 7px; --hgap: 4px; }
.nazwa .graph { --body: 9px; --title: 10px; --head: 16px; --head2: 26px; --pw: 12px; --ph: 11px; --pad: 6px; --rowtop: 3px; --hpad: 5px; --hgap: 3px; }
article { position: absolute; font-size: var(--body); line-height: 12px; color: #e2e2e2; white-space: nowrap; box-shadow: 0 2px 5px rgba(0, 0, 0, .75), 0 0 0 1px rgba(0, 0, 0, .6); }
.node { display: flex; flex-direction: column; border-radius: 5px; background: linear-gradient(rgba(28, 31, 28, .94), rgba(13, 16, 12, .94) 60%, rgba(10, 12, 9, .94)); }
.node > header { display: flex; align-items: center; height: var(--head); flex: none; padding: 0 5px 0 var(--hpad); border-radius: 5px 5px 0 0; box-shadow: inset 0 1px rgba(255, 255, 255, .3); text-shadow: 1px 1px #111; }
.node > header.two { height: var(--head2); align-items: flex-start; padding-top: 1px; }
.node > header div { flex: 1; min-width: 0; }
.node b { display: block; font-size: var(--title); line-height: 14px; font-weight: 700; color: #f0f0f0; }
.node em { display: block; line-height: 11px; color: #8d9c80; text-shadow: none; }
.red > header { background: linear-gradient(90deg, #8e1515 55%, #4c3434); }
.blue > header { background: radial-gradient(ellipse at 50% 75%, rgba(20, 40, 58, .75), transparent 65%), linear-gradient(90deg, #437ba2 30%, #35566e); }
.olive > header { background: linear-gradient(90deg, #638a60 20%, #3a4c3a 75%, #3c463c); }
.teal > header { background: linear-gradient(90deg, #137c80 45%, #3b4545 85%); }
.grey > header { background: linear-gradient(90deg, #989898 20%, #484848 65%); }
.hi { width: 12px; height: 12px; margin-right: var(--hgap); flex: none; color: #74c2f4; }
.olive .hi { color: #a6f0a0; }
.two .hi { height: 14px; }
.stop { width: 8px; height: 9px; border: 2px solid #f03030; background: #2a0000; border-radius: 2px; flex: none; }
.nazwa .stop { width: 7px; }
.clock { position: absolute; right: -7px; top: -9px; width: 17px; height: 17px; z-index: 2; }
.rows { flex: 1; display: flex; flex-direction: column; padding: var(--rowtop) var(--pad) 2px; }
.rows.one { padding-top: 0; }
.row { flex: 5 0 0; min-height: 0; display: flex; align-items: center; justify-content: space-between; }
.row.tall { flex: 6 0 0; }
.row.mid { justify-content: center; }
.more { width: 9px; height: 8px; color: #d4d4d4; }
.pin { display: flex; align-items: center; gap: 4px; }
.pin.r { flex-direction: row-reverse; margin-left: auto; }
.dot { width: var(--pw); height: var(--ph); flex: none; overflow: visible; }
.pin input[type="text"] { width: 22px; height: 14px; margin-left: 1px; padding: 0; border: 1px solid #b4b4b4; background: transparent; color: #d0d0d0; font: inherit; text-align: center; }
.pin input.n1 { width: 14px; }
.pin input.n4 { width: 31px; }
.nazwa .pin input[type="text"] { width: 18px; height: 13px; margin-left: 0; }
.nazwa .pin input.n1[type="text"] { width: 13px; }
.pawn .pin input.n1[type="text"] { width: 14px; }
.pawn .pin input.n4[type="text"] { width: 31px; }
.pin input[type="checkbox"] { appearance: none; position: relative; width: 12px; height: 12px; margin: 0 0 0 1px; border: 2px solid #c8c8c8; border-radius: 3px; background: #1c1c1c; }
.pin input[type="checkbox"]:checked { background: #c8c8c8; }
.pin input[type="checkbox"]:checked::after { content: ""; position: absolute; left: 2px; top: -1px; width: 4px; height: 7px; border: solid #222; border-width: 0 2px 2px 0; transform: rotate(40deg); }
.swatch { width: 14px; height: 13px; background: #000; border: 1px solid #3c3c3c; }
.addpin { display: flex; align-items: center; gap: 5px; margin-left: auto; }
.addpin svg { width: 10px; height: 10px; color: #fff; }

.var { display: flex; align-items: center; justify-content: flex-end; gap: 2px; padding-right: 10px; border-radius: 12px; background: radial-gradient(ellipse 50% 90% at 45% 0, var(--glow), transparent), linear-gradient(rgba(90, 90, 90, .95), rgba(30, 32, 30, .95) 35%, rgba(20, 20, 20, .95)); }
.var.object { --glow: rgba(50, 140, 190, .9); }
.var.float { --glow: rgba(120, 170, 70, .9); }
.op { display: flex; border-radius: 9px; background: linear-gradient(rgba(100, 100, 100, .9), rgba(40, 40, 40, .9) 25%, rgba(18, 18, 18, .9)); }
.ins { display: flex; flex-direction: column; gap: 6px; padding: 7px 0 0 6px; }
.op-main { flex: 1; display: flex; flex-direction: column; padding: 5px 7px 0 0; }
.op-top { display: flex; justify-content: space-between; height: 24px; }
.op-main .times { width: 9px; height: 9px; color: #9c9c9c; margin: 13px 0 0 29px; }
.conv { display: flex; align-items: center; justify-content: space-between; padding: 0 8px 0 5px; border-radius: 8px; background: linear-gradient(rgba(110, 110, 110, .9), rgba(40, 40, 40, .9) 35%, rgba(18, 18, 18, .9)); }
.conv i { width: 4px; height: 5px; border-radius: 2px; background: #8c8c8c; }

.results { height: 68px; flex: none; display: flex; flex-direction: column; gap: 5px; }
.find { display: flex; gap: 4px; padding: 0 1px; }
.find .search { height: 21px; }
.find button { width: 25px; height: 21px; background: #dcdcdc; border: 1px solid #333; border-radius: 2px; display: grid; place-items: center; }
.find button svg { width: 15px; height: 14px; }
.well { flex: 1; margin: 0 1px; border: 1px solid #000; background: linear-gradient(#282828, #191919 60%); }
.log { height: 159px; flex: none; display: flex; flex-direction: column; gap: 6px; padding: 3px 4px 13px 5px; }
.log .well { border-color: #222; color: #a8a8a8; padding: 6px 13px; }
.log .well li { display: flex; align-items: center; gap: 10px; }
.log .well li::before { content: ""; width: 4px; height: 4px; border-radius: 2px; background: #4f82c8; }
.log button { align-self: flex-end; margin-right: 9px; }
</style>
